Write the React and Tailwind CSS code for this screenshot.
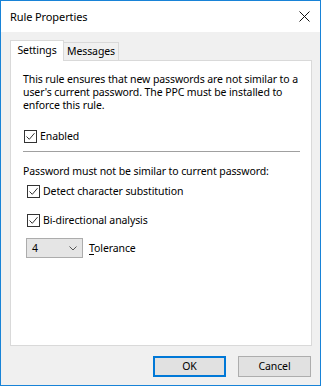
import React from "react";

function Check({ checked = true }) {
  return (
    <span className="w-[13px] h-[13px] border border-[#333333] bg-white flex items-center justify-center shrink-0">
      {checked && (
        <svg width="11" height="11" viewBox="0 0 11 11">
          <path d="M1.5 5.5 L4.3 8.3 L9.5 2.2" fill="none" stroke="#333333" strokeWidth="1" />
        </svg>
      )}
    </span>
  );
}

export default function App() {
  return (
    <div
      className="w-[322px] h-[387px] bg-white text-[#000000]"
      style={{ fontFamily: '"Segoe UI", "Noto Sans", "Open Sans", sans-serif' }}
    >
      <div className="w-[321px] h-[386px] border border-[#1883d7] bg-[#f0f0f0] flex flex-col tracking-[-0.1px]">
        <div className="h-[31px] bg-white flex items-center justify-between pl-[9px] pr-[10px] shrink-0">
          <span className="text-[11px] leading-none text-black">Rule Properties</span>
          <svg width="11" height="11" viewBox="0 0 11 11">
            <path d="M0.5 0.5 L10.5 10.5 M10.5 0.5 L0.5 10.5" stroke="#111" strokeWidth="1" />
          </svg>
        </div>
        <div className="flex flex-col pl-[9px] pr-[8px] pt-[8px] flex-1">
          <div className="flex items-end h-[20px] text-[10.5px] leading-none">
            <div className="relative z-10 -mb-px h-[21px] w-[54px] bg-white border border-b-0 border-[#d9d9d9] flex items-center justify-center pb-[1px]">
              Settings
            </div>
            <div className="h-[18px] w-[55px] bg-[#f0f0f0] border border-l-0 border-b-0 border-[#d9d9d9] flex items-center justify-center">
              Messages
            </div>
          </div>
          <div className="h-[286px] bg-white border border-[#d9d9d9] pl-[12px] pr-[10px] pt-[12px] text-[10.5px] leading-[13px]">
            <p className="w-[285px]">
              This rule ensures that new passwords are not similar to a user's current password. The PPC must be installed to enforce this rule.
            </p>
            <div className="flex items-center gap-[3px] mt-[17px] ml-[1px] h-[14px]">
              <Check />
              <span>Enabled</span>
            </div>
            <div className="mt-[8px] h-px w-[277px] bg-[#a0a0a0]" />
            <div className="mt-[13px]">Password must not be similar to current password:</div>
            <div className="flex items-center gap-[3px] mt-[6px] ml-[4px] h-[14px]">
              <Check />
              <span>Detect character substitution</span>
            </div>
            <div className="flex items-center gap-[3px] mt-[15px] ml-[4px] h-[14px]">
              <Check />
              <span>Bi-directional analysis</span>
            </div>
            <div className="flex items-center gap-[6px] mt-[11px] ml-[3px]">
              <div className="w-[57px] h-[20px] bg-[#e5e5e5] border border-[#acacac] flex items-center justify-between pl-[5px] pr-[5px]">
                <span>4</span>
                <svg width="8" height="5" viewBox="0 0 8 5">
                  <path d="M0.5 0.5 L4 4 L7.5 0.5" fill="none" stroke="#555" strokeWidth="1" />
                </svg>
              </div>
              <span>
                <span className="underline underline-offset-2">T</span>olerance
              </span>
            </div>
          </div>
          <div className="flex justify-end gap-[12px] mt-[10px] pr-[1px] text-[10.5px]">
            <div className="w-[73px] h-[21px] bg-[#e1e1e1] border-2 border-[#0078d7] flex items-center justify-center">
              OK
            </div>
            <div className="w-[73px] h-[21px] bg-[#e1e1e1] border border-[#adadad] flex items-center justify-center">
              Cancel
            </div>
          </div>
        </div>
      </div>
    </div>
  );
}
